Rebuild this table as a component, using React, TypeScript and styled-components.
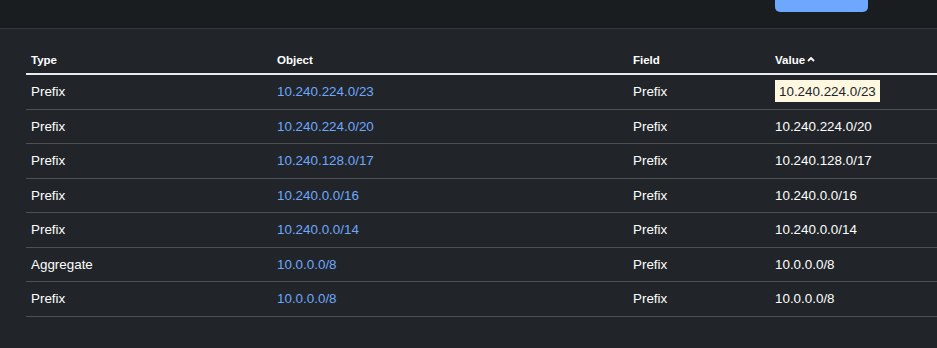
import React from "react";
import styled, { createGlobalStyle } from "styled-components";

const Global = createGlobalStyle`
  html, body { margin: 0; padding: 0; background: #1a1d20; }
  body { font-family: "Segoe UI", "Liberation Sans", Arial, sans-serif; color: #fff; }
`;

const Page = styled.div`
  width: 937px;
  height: 348px;
  overflow: hidden;
  display: flex;
  flex-direction: column;
  background: #1a1d20;
`;

const TopBar = styled.div`
  height: 28px;
  flex: none;
  display: flex;
  justify-content: flex-end;
  padding-right: 69px;
  box-sizing: border-box;
`;

const PrimaryButton = styled.button`
  width: 93px;
  height: 12px;
  border: none;
  background: #6ea8fe;
  border-radius: 0 0 5px 5px;
  padding: 0;
`;

const Panel = styled.div`
  flex: 1;
  background: #212529;
  border-top: 1px solid #363a3e;
  padding: 18px 0 0 26px;
`;

const Table = styled.table`
  width: 911px;
  border-collapse: collapse;
  table-layout: fixed;
  font-size: 13.4px;
`;

const Th = styled.th<{ $w: number }>`
  width: ${(p) => p.$w}px;
  text-align: left;
  font-weight: 700;
  font-size: 11.5px;
  padding: 5px 5px 4px;
  line-height: 17px;
  border-bottom: 2px solid #e9ecef;
  color: #fff;
  white-space: nowrap;
`;

const Caret = styled.svg`
  display: inline-block;
  margin-left: 2px;
  vertical-align: 2px;
`;

const Tr = styled.tr`
  border-bottom: 1px solid #4d5154;
`;

const Td = styled.td`
  padding: 7px 5px;
  line-height: 19.5px;
  color: #fff;
  white-space: nowrap;
`;

const Link = styled.a`
  color: #6ea8fe;
  text-decoration: none;
`;

const Mark = styled.mark`
  background: #fff8e1;
  color: #212529;
  padding: 4px 4px 3px;
`;

const rows = [
  { type: "Prefix", obj: "10.240.224.0/23", field: "Prefix", value: "10.240.224.0/23", hl: true },
  { type: "Prefix", obj: "10.240.224.0/20", field: "Prefix", value: "10.240.224.0/20" },
  { type: "Prefix", obj: "10.240.128.0/17", field: "Prefix", value: "10.240.128.0/17" },
  { type: "Prefix", obj: "10.240.0.0/16", field: "Prefix", value: "10.240.0.0/16" },
  { type: "Prefix", obj: "10.240.0.0/14", field: "Prefix", value: "10.240.0.0/14" },
  { type: "Aggregate", obj: "10.0.0.0/8", field: "Prefix", value: "10.0.0.0/8" },
  { type: "Prefix", obj: "10.0.0.0/8", field: "Prefix", value: "10.0.0.0/8" },
];

export default function App() {
  return (
    <Page>
      <Global />
      <TopBar>
        <PrimaryButton aria-label="button" />
      </TopBar>
      <Panel>
        <Table>
          <thead>
            <tr>
              <Th $w={236}>Type</Th>
              <Th $w={346}>Object</Th>
              <Th $w={132}>Field</Th>
              <Th $w={157}>
                Value
                <Caret width="8" height="6" viewBox="0 0 8 6">
                  <path d="M1 5 L4 2 L7 5" fill="none" stroke="#fff" strokeWidth="1.8" />
                </Caret>
              </Th>
            </tr>
          </thead>
          <tbody>
            {rows.map((r, i) => (
              <Tr key={i}>
                <Td>{r.type}</Td>
                <Td>
                  <Link href="#">{r.obj}</Link>
                </Td>
                <Td>{r.field}</Td>
                <Td>{r.hl ? <Mark>{r.value}</Mark> : r.value}</Td>
              </Tr>
            ))}
          </tbody>
        </Table>
      </Panel>
    </Page>
  );
}
